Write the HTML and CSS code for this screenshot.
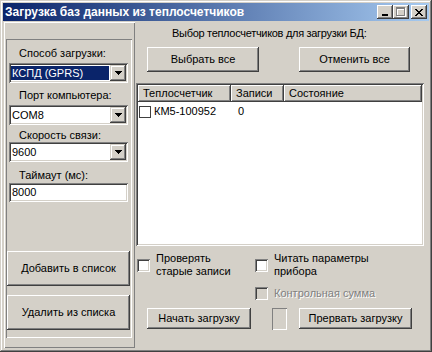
FILE: index.html
```html
<!DOCTYPE html>
<html lang="ru">
<head>
<meta charset="utf-8">
<title>Загрузка баз данных из теплосчетчиков</title>
<link rel="stylesheet" href="styles.css">
</head>
<body>
<div class="window">
  <div class="titlebar">
    <span class="title">Загрузка баз данных из теплосчетчиков</span>
    <div class="caption-btns">
      <span class="cbtn"><svg width="8" height="8" viewBox="0 0 8 8" shape-rendering="crispEdges"><path d="M1 6h6v2h-6z" fill="#000"/></svg></span>
      <span class="cbtn"><svg width="10" height="10" viewBox="0 0 10 10" shape-rendering="crispEdges"><path d="M1 1h9v9h-9z M2 3v6h7v-6z" fill="#fff" fill-rule="evenodd"/><path d="M0 0h9v9h-9z M1 2v6h7v-6z" fill="#808080" fill-rule="evenodd"/></svg></span>
      <span class="cbtn close"><svg width="8" height="7" viewBox="0 0 8 7" shape-rendering="crispEdges"><path d="M0 0h2v1h-2zM6 0h2v1h-2zM1 1h2v1h-2zM5 1h2v1h-2zM2 2h4v1h-4zM3 3h2v1h-2zM2 4h4v1h-4zM1 5h2v1h-2zM5 5h2v1h-2zM0 6h2v1h-2zM6 6h2v1h-2z" fill="#000"/></svg></span>
    </div>
  </div>
  <div class="client">
    <div class="left-panel">
      <div class="group">
        <div class="lbl l1">Способ загрузки:</div>
        <div class="combo c1"><span class="combo-text selected">КСПД (GPRS)</span><span class="drop"><svg width="7" height="4" viewBox="0 0 7 4" shape-rendering="crispEdges"><path d="M0 0h7v1h-7zM1 1h5v1h-5zM2 2h3v1h-3zM3 3h1v1h-1z" fill="#000"/></svg></span></div>
        <div class="lbl l2">Порт компьютера:</div>
        <div class="combo c2"><span class="combo-text">COM8</span><span class="drop"><svg width="7" height="4" viewBox="0 0 7 4" shape-rendering="crispEdges"><path d="M0 0h7v1h-7zM1 1h5v1h-5zM2 2h3v1h-3zM3 3h1v1h-1z" fill="#000"/></svg></span></div>
        <div class="lbl l3">Скорость связи:</div>
        <div class="combo c3"><span class="combo-text">9600</span><span class="drop"><svg width="7" height="4" viewBox="0 0 7 4" shape-rendering="crispEdges"><path d="M0 0h7v1h-7zM1 1h5v1h-5zM2 2h3v1h-3zM3 3h1v1h-1z" fill="#000"/></svg></span></div>
        <div class="lbl l4">Таймаут (мс):</div>
        <div class="edit">8000</div>
        <div class="btn big add">Добавить в список</div>
        <div class="btn big del">Удалить из списка</div>
      </div>
    </div>
    <div class="right">
      <div class="top">
        <div class="caption-lbl">Выбор теплосчетчиков для загрузки БД:</div>
        <div class="top-btns">
          <div class="btn sel-all">Выбрать все</div>
          <div class="btn unsel-all">Отменить все</div>
        </div>
      </div>
      <div class="listview">
        <div class="lv-head">
          <span class="hcell col1">Теплосчетчик</span>
          <span class="hcell col2">Записи</span>
          <span class="hcell col3">Состояние</span>
        </div>
        <div class="lv-row">
          <span class="col1 rcell"><span class="lv-check"></span>КМ5-100952</span>
          <span class="col2 rcell">0</span>
          <span class="col3 rcell"></span>
        </div>
      </div>
      <div class="bottom">
        <div class="opts">
          <label class="opt"><span class="check"></span><span class="opt-text">Проверять<br>старые записи</span></label>
          <label class="opt"><span class="check"></span><span class="opt-text">Читать параметры<br>прибора</span></label>
          <span class="opt-empty"></span>
          <label class="opt disabled"><span class="check"></span><span class="opt-text">Контрольная сумма</span></label>
        </div>
        <div class="actions">
          <div class="btn start">Начать загрузку</div>
          <span class="indicator"></span>
          <div class="btn stop">Прервать загрузку</div>
        </div>
      </div>
    </div>
  </div>
</div>
</body>
</html>
```
FILE: styles.css
```css
* { box-sizing: border-box; }
html, body { margin: 0; padding: 0; }
body {
  width: 432px; height: 352px; overflow: hidden;
  background: #d4d0c8;
  font-family: "Liberation Sans", Arial, sans-serif;
  font-size: 11px; line-height: 13px; color: #000;
}
.window {
  width: 432px; height: 352px;
  padding: 3px 3px 4px 3px;
  background: #d4d0c8;
  box-shadow: inset -1px -1px #404040, inset 1px 1px #d4d0c8, inset -2px -2px #808080, inset 2px 2px #fff;
  display: flex; flex-direction: column;
}
.titlebar {
  height: 18px; flex: none;
  background: linear-gradient(to right, #0a246a, #a6caf0);
  display: flex; align-items: center; justify-content: space-between;
  padding: 0 2px 0 2px;
}
.title { color: #fff; font-weight: bold; font-size: 12px; letter-spacing: 0; white-space: nowrap; }
.caption-btns { display: flex; align-items: center; }
.cbtn {
  width: 16px; height: 14px;
  background: #d4d0c8;
  box-shadow: inset -1px -1px #404040, inset 1px 1px #fff, inset -2px -2px #808080, inset 2px 2px #d4d0c8;
  display: flex; align-items: center; justify-content: center;
}
.cbtn.close { margin-left: 2px; }
.client { flex: 1; display: flex; margin: 1px 1px 0 1px; }

/* left */
.left-panel {
  width: 131px; flex: none;
  padding: 17px 3px 10px 2px;
  box-shadow: inset 1px 1px #fff, inset -1px -1px #808080;
  display: flex;
}
.group {
  flex: 1;
  box-shadow: inset 1px 1px #808080, inset -1px -1px #fff;
  padding: 8px 1px 8px 1px;
  display: flex; flex-direction: column;
}
.lbl { padding-left: 12px; white-space: nowrap; }
.l2 { margin-top: 6px; }
.l3 { margin-top: 4px; }
.l4 { margin-top: 7px; }
.c1 { margin-top: 3px; }
.c2 { margin-top: 3px; }
.c3 { margin-top: 0; }
.combo, .edit {
  margin-left: 2px; width: 119px; height: 20px;
  background: #fff;
  box-shadow: inset 1px 1px #808080, inset -1px -1px #fff, inset 2px 2px #404040, inset -2px -2px #d4d0c8;
  padding: 2px;
  display: flex; align-items: stretch;
}
.combo-text { flex: 1; padding-left: 1px; display: flex; align-items: center; white-space: nowrap; }
.combo-text.selected { background: #0a246a; color: #fff; margin: 1px 1px 1px 0; }
.drop {
  width: 16px; flex: none;
  background: #d4d0c8;
  box-shadow: inset -1px -1px #404040, inset 1px 1px #d4d0c8, inset -2px -2px #808080, inset 2px 2px #fff;
  display: flex; align-items: center; justify-content: center;
}
.edit { height: 19px; margin-top: 1px; padding: 3px 3px; align-items: center; }
.btn {
  background: #d4d0c8;
  box-shadow: inset -1px -1px #404040, inset 1px 1px #fff, inset -2px -2px #808080, inset 2px 2px #d4d0c8;
  display: flex; align-items: center; justify-content: center;
  white-space: nowrap;
}
.big { width: 123px; height: 35px; }
.add { margin-top: auto; }
.del { margin-top: 9px; }

/* right */
.right { flex: 1; display: flex; flex-direction: column; }
.top { padding: 5px 0 0 0; }
.caption-lbl { padding-left: 37px; white-space: nowrap; letter-spacing: -0.3px; }
.top-btns { display: flex; gap: 40px; margin-top: 7px; padding-left: 12px; }
.sel-all { width: 112px; height: 25px; }
.unsel-all { width: 111px; height: 25px; }
.listview {
  margin: 11px 0 0 1px; width: 288px; height: 163px;
  background: #fff;
  box-shadow: inset 1px 1px #808080, inset -1px -1px #fff, inset 2px 2px #404040, inset -2px -2px #d4d0c8;
  padding: 2px;
  display: flex; flex-direction: column;
}
.lv-head { display: flex; height: 17px; }
.hcell {
  background: #d4d0c8;
  box-shadow: inset -1px -1px #404040, inset 1px 1px #fff, inset -2px -2px #808080;
  padding-left: 5px; display: flex; align-items: center; white-space: nowrap;
}
.col1 { width: 93px; }
.col2 { width: 53px; }
.col3 { flex: 1; }
.lv-row { display: flex; height: 17px; margin-top: 1px; }
.rcell { display: flex; align-items: center; white-space: nowrap; }
.rcell.col2 { padding-left: 7px; }
.lv-check {
  width: 12px; height: 12px; margin: 0 3px 0 1px;
  border: 1px solid #404040; background: #fff;
}
.bottom { flex: 1; padding: 6px 0 0 2px; margin-top: 0; }
.opts { display: grid; grid-template-columns: 118px 1fr; row-gap: 9px; }
.opt { display: flex; align-items: center; gap: 6px; }
.opt-text { white-space: nowrap; }
.check {
  width: 13px; height: 13px; flex: none;
  background: #fff;
  box-shadow: inset 1px 1px #808080, inset -1px -1px #fff, inset 2px 2px #404040, inset -2px -2px #d4d0c8;
}
.opt.disabled { color: #808080; text-shadow: 1px 1px #fff; }
.opt.disabled .check { background: #d4d0c8; }
.actions { display: flex; align-items: flex-start; margin-top: 8px; padding-left: 10px; }
.start { width: 104px; height: 21px; }
.indicator {
  width: 15px; height: 22px; margin-left: 21px;
  box-shadow: inset 1px 1px #808080, inset -1px -1px #fff;
}
.stop { width: 113px; height: 21px; margin-left: 12px; }
```
